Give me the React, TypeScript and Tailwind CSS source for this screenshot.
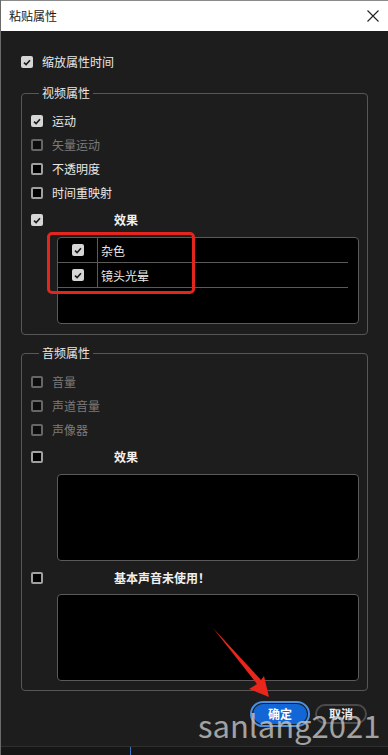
import React from "react";

type CheckProps = { checked?: boolean; disabled?: boolean };

function Check({ checked, disabled }: CheckProps) {
  if (checked) {
    return (
      <span className="flex h-[12px] w-[12px] shrink-0 items-center justify-center rounded-[2px] bg-[#d6d6d6]">
        <svg width="8" height="7" viewBox="0 0 8 7">
          <path d="M1 3.6 L3.1 5.6 L7 1.2" fill="none" stroke="#1c1c1c" strokeWidth="1.6" />
        </svg>
      </span>
    );
  }
  return (
    <span
      className={
        disabled
          ? "h-[12px] w-[12px] shrink-0 rounded-[2px] border-2 border-[#666666] bg-[#0d0d0d]"
          : "h-[12px] w-[12px] shrink-0 rounded-[2px] border-2 border-[#a0a0a0] bg-black"
      }
    />
  );
}

function Row({ label, checked, disabled }: { label: string; checked?: boolean; disabled?: boolean }) {
  return (
    <div className="flex h-[24px] items-center gap-[9px]">
      <Check checked={checked} disabled={disabled} />
      <span className={disabled ? "text-[#7b7b7b]" : "text-[#e8e8e8]"}>{label}</span>
    </div>
  );
}

function HeadRow({ label, checked }: { label: string; checked?: boolean }) {
  return (
    <div className="flex h-[26px] items-center">
      <Check checked={checked} />
      <span className="ml-[71px] font-bold text-[#f0f0f0]">{label}</span>
    </div>
  );
}

function ListBox({ items, mt }: { items: string[]; mt: string }) {
  return (
    <div className={`${mt} ml-[26px] h-[87px] overflow-hidden rounded-[4px] border border-[#5a5a5a] bg-black`}>
      {items.map((it) => (
        <div key={it} className="flex h-[25px] w-[290px] border-b border-[#5a5a5a]">
          <div className="flex w-[40px] items-center justify-center border-r border-[#5a5a5a]">
            <Check checked />
          </div>
          <span className="flex items-center pl-[3px] pt-[2px] text-[#e8e8e8]">{it}</span>
        </div>
      ))}
    </div>
  );
}

export default function App() {
  return (
    <div
      className="relative flex h-[755px] w-[388px] flex-col overflow-hidden border-l border-[#6a6a6a] bg-[#1d1d1d] text-[12px] leading-[18px]"
      style={{ fontFamily: '"Noto Sans CJK SC", "Noto Sans", sans-serif' }}
    >
      <div className="flex h-[31px] items-center justify-between border-t border-[#8a8a8a] bg-white pl-[8px] pr-[9px] text-[#1a1a1a]">
        <span>粘贴属性</span>
        <svg width="12" height="12" viewBox="0 0 12 12">
          <path d="M0.5 0.5 L11.5 11.5 M11.5 0.5 L0.5 11.5" stroke="#222" strokeWidth="1.1" />
        </svg>
      </div>

      <div className="flex flex-col px-[20px] pt-[19px]">
        <Row label="缩放属性时间" checked />

        <fieldset className="mt-[10px] rounded-[4px] border border-[#575757] pb-[10px] pl-[9px] pr-[8px]">
          <legend className="ml-[8px] px-[3px] leading-[18px] text-[#e8e8e8]">视频属性</legend>
          <div className="pt-[7px]">
            <Row label="运动" checked />
            <Row label="矢量运动" disabled />
            <Row label="不透明度" />
            <Row label="时间重映射" />
            <div className="mt-[2px]">
              <HeadRow label="效果" checked />
            </div>
            <ListBox items={["杂色", "镜头光晕"]} mt="mt-[4px]" />
          </div>
        </fieldset>

        <fieldset className="mt-[9px] rounded-[4px] border border-[#575757] pb-[9px] pl-[9px] pr-[8px]">
          <legend className="ml-[8px] px-[3px] leading-[18px] text-[#e8e8e8]">音频属性</legend>
          <div className="pt-[8px]">
            <Row label="音量" disabled />
            <Row label="声道音量" disabled />
            <Row label="声像器" disabled />
            <div className="mt-[2px]">
              <HeadRow label="效果" />
            </div>
            <ListBox items={[]} mt="mt-[4px]" />
            <div className="mt-[4px]">
              <HeadRow label="基本声音未使用！" />
            </div>
            <ListBox items={[]} mt="mt-[3px]" />
          </div>
        </fieldset>

        <div className="mt-[13px] flex justify-end gap-[8px] pr-[1px]">
          <button className="flex h-[20px] w-[54px] items-center justify-center rounded-full bg-[#1266d6] font-bold text-white outline-2 outline-offset-1 outline-[#4a8fe0]">
            确定
          </button>
          <button className="flex h-[20px] w-[52px] items-center justify-center rounded-full border-2 border-[#4a4a4a] font-bold text-[#eeeeee]">
            取消
          </button>
        </div>
      </div>

      <div className="relative mt-auto h-[9px] border-t border-[#2f2f2f] bg-[#161616]">
        <div className="absolute left-[129px] top-0 h-full w-[1px] bg-[#3c78c8]" />
      </div>

      {/* annotations over the dialog */}
      <div className="pointer-events-none absolute left-[46px] top-[232px] h-[62px] w-[148px] rounded-[5px] border-[3px] border-[#e3261d]" />
      <svg className="pointer-events-none absolute left-0 top-0" width="388" height="755" viewBox="0 0 388 755">
        <polygon points="212,628 260,680 263,676 268,697 248,689 256,684" fill="#e8261c" />
      </svg>
      <span
        className="pointer-events-none absolute left-[197px] top-[709px] text-[31px] leading-none text-[#c4c4c4] opacity-80"
        style={{ fontFamily: '"Noto Sans CJK SC", sans-serif' }}
      >
        sanlang2021
      </span>
    </div>
  );
}
